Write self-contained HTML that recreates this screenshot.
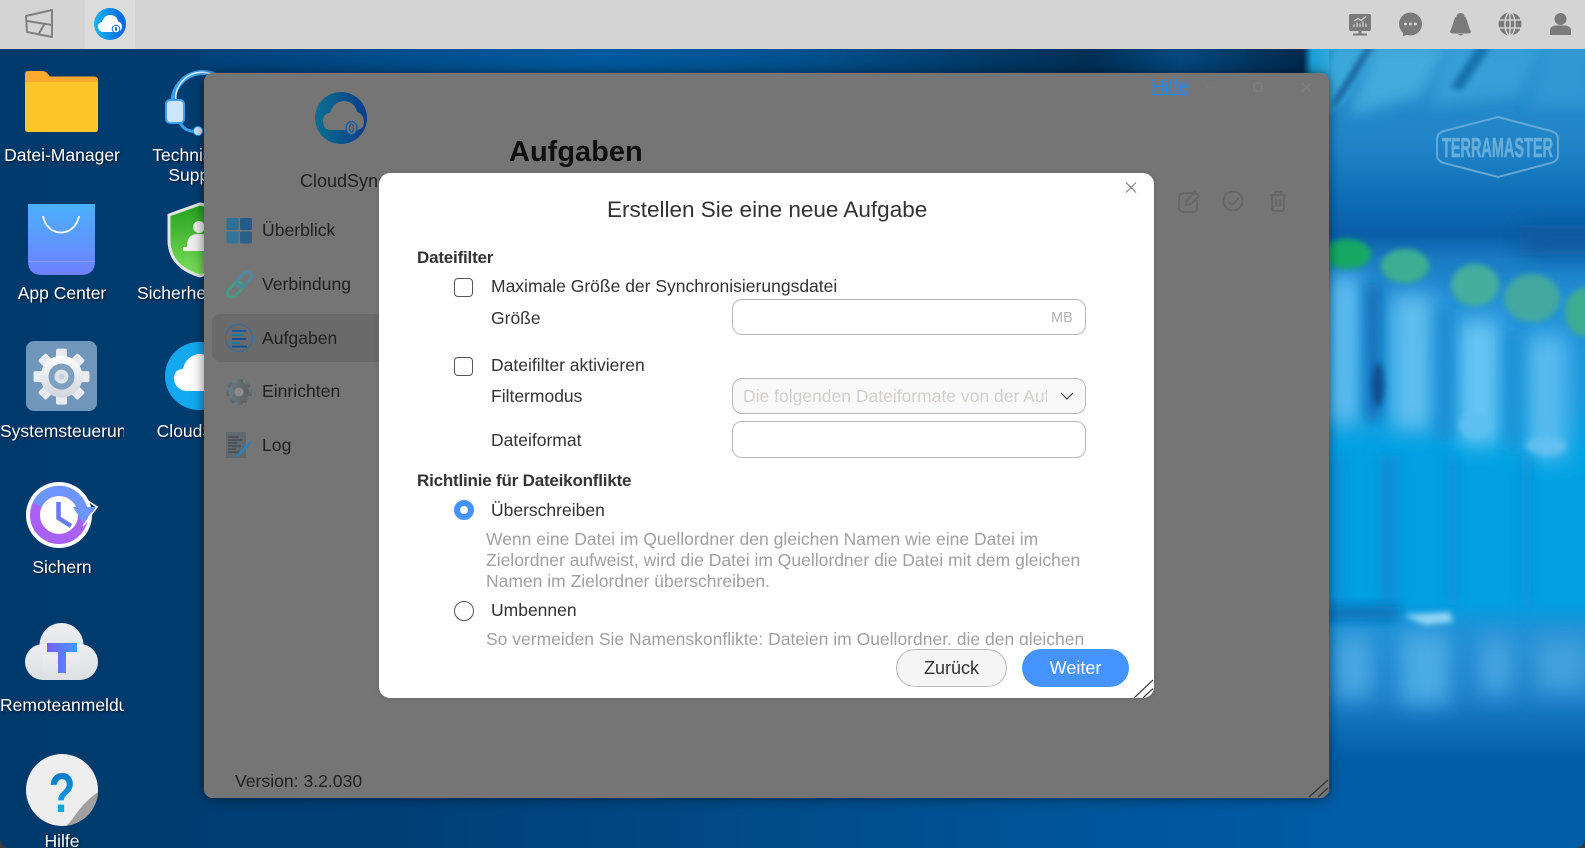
<!DOCTYPE html>
<html><head><meta charset="utf-8"><title>CloudSync</title>
<style>
html,body{margin:0;padding:0;width:1585px;height:848px;overflow:hidden;background:#3a3a3a;font-family:"Liberation Sans",Arial,sans-serif}
#desk{position:absolute;left:0;top:0;width:1585px;height:848px;overflow:hidden;border-radius:0 0 10px 10px}
.a{position:absolute}
.t{position:absolute;white-space:nowrap}
.l{position:absolute;color:#fff;font-size:17.5px;line-height:20px;text-align:center;width:124px;overflow:hidden;white-space:nowrap;text-shadow:1px 1px 2px rgba(0,0,0,.75)}
.m{position:absolute;font-size:17.6px;line-height:24px;color:#484848;white-space:nowrap}
.d{position:absolute;font-size:17.5px;line-height:20px;color:#333;white-space:nowrap}
.h{position:absolute;left:38px;font-size:17px;font-weight:bold;line-height:20px;color:#333;white-space:nowrap;letter-spacing:-.2px}
.g{position:absolute;left:107px;font-size:17.5px;line-height:21px;color:#a0a0a0;white-space:nowrap}
.box{position:absolute;box-sizing:border-box;border:1px solid #b8b8b8;border-radius:10px;background:#fff}
.cb{position:absolute;box-sizing:border-box;left:75px;width:19px;height:19px;border:1px solid #555;border-radius:4px;background:#fff}
</style></head><body>
<div id="desk">
<svg class="a" style="left:0;top:0" width="1585" height="848" viewBox="0 0 1585 848">
<defs>
<linearGradient id="bg" x1="0" x2="1" y1="0" y2="0"><stop offset="0" stop-color="#003a6c"/><stop offset=".25" stop-color="#003f76"/><stop offset=".55" stop-color="#004f8f"/><stop offset=".84" stop-color="#005ca5"/><stop offset="1" stop-color="#005ca5"/></linearGradient>
<linearGradient id="rv" gradientUnits="userSpaceOnUse" x1="0" x2="0" y1="49" y2="848">
<stop offset="0" stop-color="#2a95cf"/><stop offset=".126" stop-color="#1f82c6"/><stop offset=".19" stop-color="#0d6db5"/><stop offset=".233" stop-color="#0a5ea8"/><stop offset=".264" stop-color="#1a7cc4"/><stop offset=".314" stop-color="#2490d6"/><stop offset=".44" stop-color="#1898dc"/><stop offset=".5" stop-color="#00a2e4"/><stop offset=".69" stop-color="#00a2e4"/><stop offset=".727" stop-color="#1e90d6"/><stop offset=".815" stop-color="#1a7cc6"/><stop offset=".89" stop-color="#005ea6"/><stop offset="1" stop-color="#005ca5"/></linearGradient>
<linearGradient id="top" gradientUnits="userSpaceOnUse" x1="200" x2="1329" y1="0" y2="0"><stop offset="0" stop-color="#00417a"/><stop offset=".354" stop-color="#005a9e"/><stop offset=".531" stop-color="#00518f"/><stop offset=".698" stop-color="#003a68"/><stop offset=".788" stop-color="#002f55"/><stop offset=".869" stop-color="#04487f"/><stop offset=".933" stop-color="#02355f"/><stop offset=".977" stop-color="#01294d"/><stop offset=".985" stop-color="#1aa0d8"/><stop offset="1" stop-color="#2fa8dc"/></linearGradient>
<filter id="b3" x="-60%" y="-60%" width="220%" height="220%"><feGaussianBlur stdDeviation="3"/></filter>
<filter id="b7" x="-80%" y="-60%" width="260%" height="220%"><feGaussianBlur stdDeviation="7"/></filter>
<filter id="b10" x="-100%" y="-60%" width="300%" height="220%"><feGaussianBlur stdDeviation="11"/></filter>
<linearGradient id="tab" x1="0" x2="1"><stop offset="0" stop-color="#14b6f6"/><stop offset="1" stop-color="#0a63dc"/></linearGradient>
<linearGradient id="app" x1="0" x2="0" y1="0" y2="1"><stop offset="0" stop-color="#4bb0fb"/><stop offset="1" stop-color="#6f80ff"/></linearGradient>
<linearGradient id="gear" x1="0" x2="0" y1="0" y2="1"><stop offset="0" stop-color="#fdfdfd"/><stop offset="1" stop-color="#d0d6dd"/></linearGradient>
<linearGradient id="tt" x1="0" x2="1"><stop offset="0" stop-color="#7a5cf8"/><stop offset="1" stop-color="#3f9bff"/></linearGradient>
<linearGradient id="q" x1="0" x2="0" y1="0" y2="1"><stop offset="0" stop-color="#0a6cc0"/><stop offset="1" stop-color="#16b4f2"/></linearGradient>
<linearGradient id="sh" x1="0" x2="0" y1="0" y2="1"><stop offset="0" stop-color="#24a01e"/><stop offset="1" stop-color="#7ee05c"/></linearGradient>
<linearGradient id="rm" x1="0" x2="0" y1="0" y2="1"><stop offset="0" stop-color="#eceef0"/><stop offset="1" stop-color="#dcdfe3"/></linearGradient>
<clipPath id="cr"><rect x="1329" y="49" width="256" height="799"/></clipPath>
</defs>
<rect width="1585" height="848" fill="url(#bg)"/>
<rect x="200" y="49" width="1129" height="30" fill="url(#top)"/>
<g clip-path="url(#cr)">
<rect x="1329" y="49" width="256" height="799" fill="url(#rv)"/>
<!-- ceiling streaks -->
<path d="M1335 49H1375L1345 100 1325 115 1329 70Z" fill="#3aa8dc" filter="url(#b3)"/>
<path d="M1368 45L1376 45 1340 100 1328 110Z" fill="#0a5290" filter="url(#b3)"/>
<path d="M1375 45L1450 45 1420 95 1350 115Z" fill="#42aadd" filter="url(#b7)"/>
<path d="M1450 45L1540 45 1520 95 1430 105Z" fill="#379fd8" filter="url(#b7)"/>
<path d="M1478 45L1492 45 1462 90 1450 88Z" fill="#1672ad" filter="url(#b3)"/>
<path d="M1545 45L1590 45 1590 105 1530 105Z" fill="#3398d4" filter="url(#b7)"/>
<rect x="1520" y="225" width="90" height="30" fill="#0a5a9e" filter="url(#b10)"/>
<!-- columns -->
<rect x="1325" y="275" width="36" height="150" fill="#5cbcf0" filter="url(#b10)"/>
<rect x="1392" y="295" width="40" height="135" fill="#62c0f0" filter="url(#b10)"/>
<rect x="1458" y="320" width="42" height="125" fill="#68c6f4" filter="url(#b10)"/>
<rect x="1527" y="335" width="40" height="125" fill="#5abcf0" filter="url(#b10)"/>
<rect x="1366" y="285" width="14" height="135" fill="#0a68b2" filter="url(#b7)"/>
<ellipse cx="1378" cy="385" rx="6" ry="22" fill="#0a4f90" filter="url(#b3)"/>
<rect x="1438" y="310" width="14" height="130" fill="#1a88d0" filter="url(#b7)"/>
<rect x="1506" y="330" width="14" height="120" fill="#1f90d5" filter="url(#b7)"/>
<ellipse cx="1546" cy="446" rx="20" ry="9" fill="#64c0f0" filter="url(#b3)"/>
<ellipse cx="1475" cy="425" rx="16" ry="12" fill="#5cc0f2" filter="url(#b3)"/>
<!-- green leds -->
<ellipse cx="1347" cy="254" rx="24" ry="15" fill="#17a864" filter="url(#b3)"/>
<ellipse cx="1405" cy="266" rx="24" ry="17" fill="#3cae90" filter="url(#b3)"/>
<ellipse cx="1475" cy="285" rx="24" ry="21" fill="#45ae9e" filter="url(#b3)"/>
<ellipse cx="1532" cy="298" rx="28" ry="24" fill="#42a8a0" filter="url(#b3)"/>
<ellipse cx="1585" cy="312" rx="20" ry="24" fill="#3cad8f" filter="url(#b3)"/>
<!-- lower columns -->
<rect x="1333" y="455" width="12" height="150" fill="#0c8ed6" filter="url(#b7)"/>
<rect x="1378" y="455" width="22" height="150" fill="#0a8ed6" filter="url(#b7)"/>
<rect x="1446" y="455" width="12" height="150" fill="#0c90d8" filter="url(#b7)"/>
<rect x="1520" y="455" width="12" height="150" fill="#0c90d8" filter="url(#b7)"/>
<!-- floor reflection -->
<rect x="1320" y="606" width="80" height="14" fill="#0a6cb2" filter="url(#b7)"/>
<rect x="1335" y="636" width="38" height="62" fill="#48a8e2" filter="url(#b10)"/>
<rect x="1400" y="632" width="50" height="72" fill="#4cace4" filter="url(#b10)"/>
<rect x="1478" y="636" width="36" height="58" fill="#44a4e0" filter="url(#b10)"/>
<rect x="1534" y="636" width="56" height="56" fill="#40a0dc" filter="url(#b10)"/>
<path d="M1403 615L1450 612 1453 622 1425 625Z" fill="#8fd4f4" filter="url(#b3)"/>
<!-- logo -->
<path d="M1498 117L1551 131Q1558 133 1558 139V155Q1558 161 1551 163L1498 177 1444 163Q1437 161 1437 155V139Q1437 133 1444 131Z" fill="none" stroke="#63a8d6" stroke-width="2"/>
<text x="1442" y="157" textLength="111" lengthAdjust="spacingAndGlyphs" font-family="Liberation Sans" font-weight="bold" font-size="28" fill="#68aeda" stroke="#68aeda" stroke-width=".5">TERRAMASTER</text>
</g>
<!-- Desktop icons -->
<path d="M25 132V74Q25 71 28 71H42Q45 71 47 73L50 76.500H94Q98 76.500 98 80V82H25Z" fill="#ffa92e"/>
<path d="M25 82H98V129Q98 132 95 132H28Q25 132 25 129Z" fill="#ffc628"/>
<path d="M28 204H95V261Q95 275 81 275H42Q28 275 28 261Z" fill="url(#app)"/>
<path d="M28 261.500H95" stroke="#8a9cff" stroke-width=".7"/>
<path d="M43 216C47 238 75 238 79 216" fill="none" stroke="#fff" stroke-width="1.800"/>
<rect x="26" y="341" width="71" height="70" rx="8" fill="#7096bb"/>
<g fill="#e8ebef">
<rect x="56" y="348.600" width="11" height="12" rx="2"/><rect x="56" y="348.600" width="11" height="12" rx="2" transform="rotate(45 61.500 376.600)"/><rect x="56" y="348.600" width="11" height="12" rx="2" transform="rotate(90 61.500 376.600)"/><rect x="56" y="348.600" width="11" height="12" rx="2" transform="rotate(135 61.500 376.600)"/><rect x="56" y="348.600" width="11" height="12" rx="2" transform="rotate(180 61.500 376.600)"/><rect x="56" y="348.600" width="11" height="12" rx="2" transform="rotate(225 61.500 376.600)"/><rect x="56" y="348.600" width="11" height="12" rx="2" transform="rotate(270 61.500 376.600)"/><rect x="56" y="348.600" width="11" height="12" rx="2" transform="rotate(315 61.500 376.600)"/>
</g>
<circle cx="61.500" cy="376.600" r="21" fill="url(#gear)"/>
<circle cx="61.500" cy="376.600" r="13" fill="#7e9fbf"/><circle cx="61.500" cy="376.600" r="7" fill="#dfe4e9"/><circle cx="61.500" cy="376.600" r="3" fill="#c5d0dc"/>
<circle cx="59" cy="515" r="33" fill="#fff"/>
<circle cx="59" cy="515" r="24" fill="none" stroke="#a860f5" stroke-width="10"/>
<path d="M37 505A24 24 0 0 1 82 508" fill="none" stroke="#6c95ff" stroke-width="10"/>
<path d="M73 507L96 507 83 523Z" fill="#6c95ff"/>
<path d="M88 501L97 507 83 526" fill="none" stroke="#fff" stroke-width="1.600"/>
<path d="M58.500 502V518L71 526" fill="none" stroke="#6a7cf0" stroke-width="4.500"/>
<g fill="url(#rm)"><circle cx="61.500" cy="645" r="22"/><circle cx="43" cy="662" r="18"/><circle cx="80" cy="662" r="18"/><rect x="43" y="655" width="37" height="25"/></g>
<path d="M47 643H77V652H66V673H58V652H47Z" fill="url(#tt)"/>
<circle cx="62" cy="790" r="36" fill="#eeeeee"/>
<path d="M98 792C97 808 85 823 66 826 74 820 78 806 98 792Z" fill="#a0a0a0"/>
<text transform="translate(62 812) scale(.78 1)" text-anchor="middle" font-family="Liberation Sans" font-size="56" font-weight="bold" fill="url(#q)">?</text>
<!-- headset -->
<path d="M173 104A30 30 0 0 1 232 95" fill="none" stroke="#3aa0f0" stroke-width="5"/>
<path d="M176 102A26 26 0 0 1 228 95" fill="none" stroke="#dff0ff" stroke-width="1.500"/>
<path d="M179 120C183 131 190 131 198 132" fill="none" stroke="#3aa0f0" stroke-width="3"/>
<rect x="166" y="100" width="18" height="23" rx="4" fill="#cfe5ff" stroke="#3aa0f0" stroke-width="2"/>
<circle cx="198" cy="131" r="4.500" fill="#cfe5ff" stroke="#3aa0f0"/>
<path d="M169 215L200 204 240 214V240C238 258 220 270 200 276 180 270 169 258 169 240Z" fill="url(#sh)" stroke="#e4e4e4" stroke-width="3"/>
<circle cx="199" cy="227" r="6" fill="#eee"/><path d="M187 247C187 236 192 234 199 234 206 234 211 236 211 247Z" fill="#eee"/><rect x="183" y="247" width="30" height="4" fill="#eee"/>
<circle cx="199" cy="376" r="34" fill="#13a8f0"/>
<path d="M188 391C178 391 174 384 174 378 174 372 178 369 183 369 185 360 192 354 200 354 210 354 216 364 216 374 226 374 226 391 216 391Z" fill="#fff"/>
</svg>
<div class="l" style="left:0;top:145px">Datei-Manager</div>
<div class="l" style="left:0;top:283px">App Center</div>
<div class="l" style="left:0;top:421px">Systemsteuerung</div>
<div class="l" style="left:0;top:557px">Sichern</div>
<div class="l" style="left:0;top:695px">Remoteanmeldung</div>
<div class="l" style="left:0;top:831px">Hilfe</div>
<div class="l" style="left:137px;width:124px;top:145px">Technischer</div>
<div class="l" style="left:137px;width:124px;top:165px">Support</div>
<div class="l" style="left:137px;width:124px;top:283px">Sicherheitsberater</div>
<div class="l" style="left:137px;width:124px;top:421px">CloudSync</div>

<!-- Window -->
<div class="a" id="win" style="left:204px;top:73px;width:1125px;height:725px;background:#fff;border-radius:9px;box-shadow:0 0 12px rgba(0,0,0,.55);overflow:hidden">
  <div class="a" style="left:8px;top:241px;width:300px;height:48px;border-radius:8px;background:#e8e8e8"></div>
  <div class="t" style="left:96px;top:96px;font-size:18px;line-height:24px;color:#484848">CloudSync</div>
  <div class="m" style="left:58px;top:145px">Überblick</div>
  <div class="m" style="left:58px;top:199px">Verbindung</div>
  <div class="m" style="left:58px;top:253px">Aufgaben</div>
  <div class="m" style="left:58px;top:306px">Einrichten</div>
  <div class="m" style="left:58px;top:360px">Log</div>
  <div class="t" style="left:305px;top:61px;font-size:29px;line-height:36px;font-weight:bold;color:#222">Aufgaben</div>
  <div class="t" style="left:31px;top:698px;font-size:17.6px;line-height:20px;color:#484848">Version: 3.2.030</div>
  <div class="a" style="left:0;top:0;width:100%;height:100%;background:rgba(0,0,0,.54)"></div>
  <svg class="a" style="left:0;top:0" width="1125" height="725" viewBox="204 73 1125 725">
    <defs><linearGradient id="cs" x1="0" x2="1"><stop offset="0" stop-color="#0a7090"/><stop offset="1" stop-color="#0a3d8c"/></linearGradient>
    <linearGradient id="eg" x1="0" x2="1"><stop offset="0" stop-color="#6b7d85"/><stop offset="1" stop-color="#5e5e5e"/></linearGradient></defs>
    <circle cx="341" cy="118" r="26" fill="url(#cs)"/>
    <path d="M330 130C325 130 323 125 323 121 323 116 326 113 330 113 332 106 337 101 344 101 351 101 356 106 357 112 361 113 364 117 364 122 364 127 361 130 356 130Z" fill="#757575"/>
    <ellipse cx="351.500" cy="128" rx="5.500" ry="6.500" fill="#757575" stroke="#0a5cab" stroke-width="1.300"/><ellipse cx="351.500" cy="128" rx="2" ry="4" fill="none" stroke="#0a5cab" stroke-width="1.300"/>
    <rect x="226.500" y="218" width="12" height="12" rx="1.500" fill="#2e7096"/><rect x="240" y="218" width="12" height="12" rx="1.500" fill="#235c86"/><rect x="226.500" y="231.500" width="12" height="12" rx="1.500" fill="#33759a"/><rect x="240" y="231.500" width="12" height="12" rx="1.500" fill="#2a5f88"/>
    <rect x="226" y="285" width="18" height="9" rx="4.500" transform="rotate(-47 235 289.500)" fill="none" stroke="#4a9a82" stroke-width="3"/>
    <rect x="235" y="275" width="18" height="9" rx="4.500" transform="rotate(-47 244 279.500)" fill="none" stroke="#4a8aa0" stroke-width="3"/>
    <circle cx="239" cy="338" r="13.500" fill="none" stroke="#2d6ea8" stroke-width="1"/>
    <path d="M232 331H246" stroke="#1258a8" stroke-width="1.800"/><path d="M232 335H243" stroke="#0a7fa8" stroke-width="1.800"/><path d="M232 339H246" stroke="#0a4ea0" stroke-width="1.800"/><path d="M232 343H240" stroke="#0a7fa8" stroke-width="1.800"/><path d="M232 346.500H247" stroke="#0a4ea0" stroke-width="1.800"/>
    <g fill="url(#eg)"><rect x="235" y="379" width="8" height="26" rx="2"/><rect x="235" y="379" width="8" height="26" rx="2" transform="rotate(45 239 392)"/><rect x="235" y="379" width="8" height="26" rx="2" transform="rotate(90 239 392)"/><rect x="235" y="379" width="8" height="26" rx="2" transform="rotate(135 239 392)"/><circle cx="239" cy="392" r="10"/></g>
    <circle cx="239" cy="392" r="4.500" fill="#8c8c8c"/>
    <rect x="226" y="432" width="20" height="26" fill="#5f6a70"/>
    <path d="M228 437H239M228 440H242M228 443H237M228 446H241M228 449H236M228 452H240" stroke="#3c3f41" stroke-width="1"/>
    <path d="M237 456L251 442" stroke="#2f7fb8" stroke-width="2.600"/>
    <g fill="none" stroke="#666" stroke-width="1.800"><path d="M1196 193H1184Q1179 193 1179 198V208Q1179 212 1184 212H1193Q1197 212 1197 208V200"/><path d="M1186 205L1187 200 1195 192 1199 196 1191 204Z"/><circle cx="1233" cy="201" r="9.500"/><path d="M1228 201L1232 205 1239 198"/><path d="M1270 195H1286M1275 195V192H1281V195M1272 195V208Q1272 211 1275 211H1281Q1284 211 1284 208V195M1276 199V207M1280 199V207"/></g>
    <g fill="none" stroke="#7f7f7f" stroke-width="1.100"><path d="M1207 87H1216"/><rect x="1254" y="83" width="8" height="8" rx="1.500"/><path d="M1302 83L1311 92M1311 83L1302 92"/></g>
    <g stroke="#333" stroke-width="1.200"><path d="M1309 797L1328 780M1318 797L1328 788M1325 797L1328 794"/></g>
  </svg>
  <div class="t" style="left:947px;top:3px;font-size:19px;line-height:24px;color:#1a8cff;text-decoration:underline">Hilfe</div>
</div>

<!-- Top bar -->
<div class="a" style="left:0;top:0;width:1585px;height:49px;background:#d4d4d4"></div>
<div class="a" style="left:85px;top:0;width:50px;height:49px;background:#dcdcdc"></div>
<svg class="a" style="left:0;top:0" width="1585" height="49" viewBox="0 0 1585 49">
<g fill="none" stroke="#808080" stroke-width="2" stroke-linejoin="round"><path d="M26 16L52 10V37L27 32Z"/><path d="M27 21L52 25M45 23L38 35"/></g>
<circle cx="110" cy="24" r="16" fill="url(#tab)"/>
<path d="M103 32C100 32 98 29 98 26.500 98 24 100 22 102 22 103 18 106 15 110 15 115 15 117.500 18 118 21.500 120.500 22 122 24 122 26.500 122 29.500 120 32 117 32Z" fill="#fff"/>
<circle cx="116" cy="29" r="3.800" fill="#fff" stroke="#0a6ad8" stroke-width="1"/><rect x="115" y="27" width="2" height="4" rx="1" fill="#0a6ad8"/>
<g fill="#7a7a7a">
<rect x="1349" y="14" width="22" height="17" rx="2"/><path d="M1358.500 31H1361.500V33.500H1367V35.500H1353V33.500H1358.500Z"/>
<circle cx="1410.500" cy="24" r="11.500"/><path d="M1403 31L1403 36 1410 34Z"/>
<path d="M1460.500 13C1457.500 13 1456.500 15 1456.500 16.500 1453.500 18 1453.500 25 1450 31.500 1450 33 1452 33.500 1453 33.500H1468C1469 33.500 1471 33 1471 31.500 1467.500 25 1467.500 18 1464.500 16.500 1464.500 15 1463.500 13 1460.500 13ZM1457.500 34Q1460.500 37 1463.500 34Z"/>
<circle cx="1510" cy="24" r="11.500"/>
<circle cx="1560.500" cy="19" r="6"/><path d="M1550 35V30C1550 27 1554 25.500 1556 25.500H1565C1567 25.500 1571 27 1571 30V35Z"/>
</g>
<g fill="none" stroke="#d4d4d4" stroke-width="1.200"><path d="M1354 27V24.500M1357 27V22.500M1360 27V23.500M1363 27V21.500M1366 27V23.500M1354 21L1358 18.500 1361 20.500 1366 16.500"/></g>
<g fill="none" stroke="#d4d4d4" stroke-width="1.500"><ellipse cx="1510" cy="24" rx="5" ry="11.500"/><path d="M1510 12.500V35.500M1499 20H1521M1499 28H1521"/></g>
<g fill="#d4d4d4"><circle cx="1405.500" cy="24" r="1.500"/><circle cx="1410.500" cy="24" r="1.500"/><circle cx="1415.500" cy="24" r="1.500"/></g>
</svg>

<!-- Dialog -->
<div class="a" style="left:379px;top:173px;width:775px;height:525px;background:#fff;border-radius:11px;overflow:hidden;box-shadow:0 0 6px rgba(0,0,0,.12)">
  <svg class="a" style="left:0;top:0;z-index:3" width="775" height="525" viewBox="379 173 775 525">
    <path d="M1126 182.500L1136 192.500M1136 182.500L1126 192.500" stroke="#777" stroke-width="1.100" fill="none"/>
    <path d="M1134 698L1153 680M1143 698L1153 688.500" stroke="#333" stroke-width="1.200" fill="none"/>
    <path d="M1061 393L1067 399 1073 393" fill="none" stroke="#333" stroke-width="1.100"/>
  </svg>
  <div class="t" style="left:228px;top:23px;font-size:22.500px;line-height:28px;color:#333">Erstellen Sie eine neue Aufgabe</div>
  <div class="h" style="top:75px">Dateifilter</div>
  <div class="cb" style="top:105px"></div>
  <div class="d" style="left:112px;top:103px">Maximale Größe der Synchronisierungsdatei</div>
  <div class="d" style="left:112px;top:135px">Größe</div>
  <div class="box" style="left:353px;top:126px;width:354px;height:36px"></div>
  <div class="t" style="left:672px;top:135px;font-size:14.500px;line-height:20px;color:#b4b4b4">MB</div>
  <div class="cb" style="top:184px"></div>
  <div class="d" style="left:112px;top:182px">Dateifilter aktivieren</div>
  <div class="d" style="left:112px;top:213px">Filtermodus</div>
  <div class="box" style="left:353px;top:205px;width:354px;height:36px;background:#f9f9f9"></div>
  <div class="t" style="left:364px;top:213px;width:304px;overflow:hidden;font-size:17.500px;line-height:20px;color:#d3d0cb">Die folgenden Dateiformate von der Aufgabe ausschließen</div>
  <div class="d" style="left:112px;top:257px">Dateiformat</div>
  <div class="box" style="left:353px;top:248px;width:354px;height:37px"></div>
  <div class="h" style="top:298px">Richtlinie für Dateikonflikte</div>
  <div class="a" style="left:75px;top:327px;width:20px;height:20px;border-radius:50%;box-sizing:border-box;border:6px solid #4593ff;background:#fff"></div>
  <div class="d" style="left:112px;top:327px">Überschreiben</div>
  <div class="g" style="top:356px">Wenn eine Datei im Quellordner den gleichen Namen wie eine Datei im</div>
  <div class="g" style="top:377px">Zielordner aufweist, wird die Datei im Quellordner die Datei mit dem gleichen</div>
  <div class="g" style="top:398px">Namen im Zielordner überschreiben.</div>
  <div class="a" style="left:75px;top:428px;width:20px;height:20px;border-radius:50%;box-sizing:border-box;border:1px solid #555;background:#fff"></div>
  <div class="d" style="left:112px;top:427px">Umbennen</div>
  <div class="a" style="left:0;top:455px;width:775px;height:17px;overflow:hidden"><div class="g" style="top:1px">So vermeiden Sie Namenskonflikte: Dateien im Quellordner, die den gleichen</div></div>
  <div class="a" style="left:517px;top:476px;width:111px;height:38px;box-sizing:border-box;border:1px solid #bbb;border-radius:19px;background:#f5f5f5;color:#333;font-size:18px;line-height:36px;text-align:center">Zurück</div>
  <div class="a" style="left:643px;top:476px;width:107px;height:38px;border-radius:19px;background:#4593ff;color:#fff;font-size:18px;line-height:38px;text-align:center">Weiter</div>
</div>
</div>
</body></html>
